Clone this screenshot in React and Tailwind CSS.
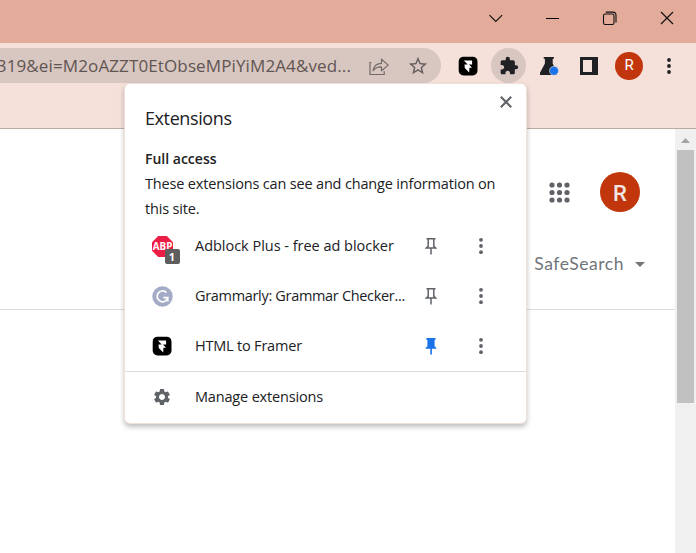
import React from "react";
import { MdExtension, MdSettings, MdStarBorder, MdArrowDropDown } from "react-icons/md";

const UI = "font-['Open_Sans','Noto_Sans',sans-serif]";

function FramerIcon() {
  return (
    <svg width="20" height="20" viewBox="0 0 20 20">
      <rect x="0.7" y="0.7" width="18.8" height="18.8" rx="4.8" fill="#000" />
      <path d="M5.8 4.5h8.3v4H11l3 3.3h-2.6l-.2 4.8-4.4-4.6-.3-3.5h3.2z" fill="#fff" />
    </svg>
  );
}

function Dots({ className, gap = 6 }) {
  return (
    <svg width="6" height="18" viewBox="0 0 6 18" className={className} fill="currentColor">
      <circle cx="3" cy={9 - gap} r="1.9" />
      <circle cx="3" cy="9" r="1.9" />
      <circle cx="3" cy={9 + gap} r="1.9" />
    </svg>
  );
}

function Pin({ pinned }) {
  return (
    <svg width="12" height="18" viewBox="0 0 12 18">
      {pinned ? (
        <path d="M1.5 1h9v2H9.6v6.2l1.7 1.6v1H6.9V17.5H5.3v-5.7H.7v-1l1.7-1.6V3h-.9z" fill="#1a73e8" />
      ) : (
        <path d="M1.5 1.75h9M3.2 2v7.3L1.3 11h9.4L8.8 9.3V2M6 11v6.5" fill="none" stroke="#5f6368" strokeWidth="1.5" />
      )}
    </svg>
  );
}

function AdblockIcon() {
  return (
    <span className="relative block h-[21px] w-[21px]">
      <svg width="21" height="21" viewBox="0 0 21 21">
        <path d="M6.2 0h8.6L21 6.2v8.6L14.8 21H6.2L0 14.8V6.2z" fill="#ed1e45" />
        <text x="10.6" y="14.2" textAnchor="middle" textLength="19.5" lengthAdjust="spacingAndGlyphs" fontSize="10.5" fontWeight="700" fill="#fff" fontFamily="Open Sans">ABP</text>
      </svg>
      <span className="absolute left-[13px] top-[13px] flex h-[15px] w-[15px] items-center justify-center rounded-[2px] bg-[#5e5e5e] font-['Open_Sans'] text-[11px] font-bold leading-none text-white">1</span>
    </span>
  );
}

function GrammarlyIcon() {
  return (
    <svg width="21" height="21" viewBox="0 0 21 21" fill="none">
      <circle cx="10.5" cy="10.5" r="10.2" fill="#a3abc6" />
      <path d="M14.4 6.6A5.4 5.4 0 1 0 15.8 11.6H11.3M15.7 11v4.4" stroke="#fff" strokeWidth="1.7" />
    </svg>
  );
}

function Row({ icon, label, spacing, pinned }) {
  return (
    <div className="flex h-[50px] items-center">
      <div className="flex w-[70px] items-center justify-center pl-1">{icon}</div>
      <div className={"w-[226px] whitespace-nowrap text-[14.5px] text-[#202124] " + spacing}>{label}</div>
      <div className="flex w-5 justify-center">
        <Pin pinned={pinned} />
      </div>
      <div className="flex w-20 justify-center">
        <Dots className="text-[#5f6368]" gap={6.2} />
      </div>
    </div>
  );
}

function Popup() {
  return (
    <div className={"absolute left-[125px] top-[84px] h-[339px] w-[401px] rounded-[5px] bg-white text-[#202124] shadow-[0_0_0_1px_#f1dfda,0_3px_5px_1px_rgba(60,60,60,0.32)] " + UI}>
      <svg width="12" height="12" viewBox="0 0 12 12" className="absolute left-[375px] top-[12px]">
        <path d="M.8.8l10.4 10.4M11.2.8L.8 11.2" stroke="#5f6368" strokeWidth="2.1" />
      </svg>
      <div className="h-[137px] pl-[20px] pt-[22px]">
        <h1 className="mb-[15px] text-[18px] leading-[25px] tracking-[-0.4px]">Extensions</h1>
        <h2 className="text-[14px] font-semibold leading-[25px] tracking-[0px]">Full access</h2>
        <p className="whitespace-nowrap text-[14.5px] leading-[25px] tracking-[-0.17px]">
          These extensions can see and change information on
          <br />
          this site.
        </p>
      </div>
      <Row icon={<AdblockIcon />} label="Adblock Plus - free ad blocker" spacing="tracking-[-0.02px]" />
      <Row icon={<GrammarlyIcon />} label="Grammarly: Grammar Checker..." spacing="tracking-[-0.32px]" />
      <Row icon={<FramerIcon />} label="HTML to Framer" spacing="tracking-[-0.2px]" pinned />
      <div className="flex h-[51px] items-center border-t border-[#dcdcdc]">
        <div className="flex w-[70px] justify-center pl-1">
          <MdSettings size={20} color="#5f6368" />
        </div>
        <span className="text-[14.5px] tracking-[-0.17px]">Manage extensions</span>
      </div>
    </div>
  );
}

function TitleBar() {
  return (
    <div className="flex h-[43px] items-center bg-[#e3ab99] pb-[7px] pl-[467px]">
      <svg width="57" height="14" fill="none" stroke="#111" strokeWidth="1.1">
        <path d="M22.5 4.2l6.3 6.3 6.3-6.3" />
      </svg>
      <svg width="57" height="14" fill="none" stroke="#000" strokeWidth="1">
        <path d="M22 7.5h13" />
      </svg>
      <svg width="57" height="14" fill="none" stroke="#111" strokeWidth="1.1">
        <rect x="22.5" y="3" width="10.5" height="10.5" rx="1.8" />
        <path d="M24.8 1.1h7.2a3 3 0 0 1 3 3v7.3" />
      </svg>
      <svg width="57" height="14" fill="none" stroke="#111" strokeWidth="1.2">
        <path d="M23 1l12 12M35 1L23 13" />
      </svg>
    </div>
  );
}

function Toolbar() {
  return (
    <div className="h-[86px] border-b border-[#bdaaa5] bg-[#f5e0da] pt-[5px]">
      <div className="flex h-[35px] items-center">
        <div className="flex h-[35px] w-[441px] items-center overflow-hidden rounded-r-full bg-[#d8c6c0]">
          <div className={"flex w-[351px] shrink-0 justify-end overflow-hidden whitespace-nowrap text-[17px] tracking-[0.12px] text-[#5f5553] " + UI}>
            319&amp;ei=M2oAZZT0EtObseMPiYiM2A4&amp;ved...
          </div>
          <svg width="55" height="22" viewBox="0 0 55 22" fill="none" stroke="#716a69" strokeWidth="1.2">
            <path d="M20.4 7.5H19v12h14.2v-3.2" />
            <path d="M22 15.5c.8-4.6 3.8-7 8.5-7.2V4.2l6.7 5.9-6.7 5.7v-3.9c-3.6-.1-6.2 1-8.5 3.6z" strokeLinejoin="round" />
          </svg>
          <MdStarBorder size={22} color="#65605f" className="ml-px" />
        </div>
        <div className="ml-[7px] flex w-10 justify-center"><FramerIcon /></div>
        <div className="flex w-[41px] justify-center">
          <div className="flex h-[35px] w-[35px] items-center justify-center rounded-full bg-[#d8c6c0]">
            <MdExtension size={20} color="#202124" />
          </div>
        </div>
        <div className="flex w-10 justify-center">
          <svg width="20" height="20" viewBox="0 0 20 20">
            <path d="M4.7 1h10.2v1.8h-1.2v4.7L18 16.7V19H1v-2.3l4.9-9.2V2.8H4.7z" fill="#202124" />
            <circle cx="15" cy="14.8" r="4.5" fill="#1a73e8" stroke="#f5e0da" strokeWidth="0.6" />
          </svg>
        </div>
        <div className="flex w-10 justify-center">
          <div className="h-[18px] w-[18px] bg-[#202124] p-[3px] pr-[7px]">
            <div className="h-3 w-[9px] bg-[#f5e0da]" />
          </div>
        </div>
        <div className="flex w-10 justify-center">
          <div className="flex h-7 w-7 items-center justify-center rounded-full bg-[#c1360c] font-[Roboto,sans-serif] text-[15px] text-white">R</div>
        </div>
        <div className="flex w-10 justify-center"><Dots className="text-[#202124]" gap={6} /></div>
      </div>
    </div>
  );
}

const GRID = [3, 10.5, 18];

function Page() {
  return (
    <div className="flex h-[424px] bg-white">
      <div className="w-[675px]">
        <div className="flex h-[181px] flex-col items-end border-b border-[#dadce0] pr-[25px]">
          <div className="mr-[10px] mt-[43px] flex items-center gap-[30px]">
            <svg width="21" height="21" fill="#5f6368">
              {GRID.map((y) => GRID.map((x) => <circle key={x + "-" + y} cx={x} cy={y} r="2.6" />))}
            </svg>
            <div className="flex h-10 w-10 items-center justify-center rounded-full bg-[#c1360c] pt-[2px] font-[Roboto,sans-serif] text-[22px] font-medium text-[#f1e6e3]">R</div>
          </div>
          <div className="-mr-[2px] mt-[40px] flex items-center font-[Lato,sans-serif] text-[17.5px] leading-6 tracking-[0.55px] text-[#70757a]">
            <span>SafeSearch</span>
            <MdArrowDropDown size={24} className="ml-[4px]" />
          </div>
        </div>
      </div>
      <div className="w-[21px] bg-[#f0f0f0] pl-[2px]">
        <svg width="17" height="21" fill="#a3a3a3"><path d="M4 14l4.5-5 4.5 5z" /></svg>
        <div className="h-[253px] w-[17px] bg-[#c1c1c1]" />
      </div>
    </div>
  );
}

export default function App() {
  return (
    <div className="relative h-[553px] w-[696px] overflow-hidden">
      <TitleBar />
      <Toolbar />
      <Page />
      <Popup />
    </div>
  );
}
